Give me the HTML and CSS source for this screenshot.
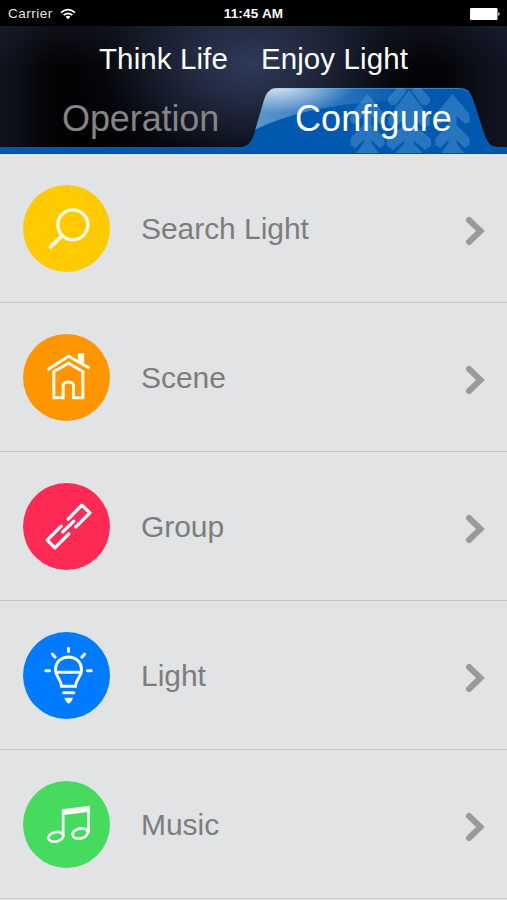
FILE: index.html
```html
<!DOCTYPE html>
<html lang="en">
<head>
<meta charset="utf-8">
<title>Configure</title>
<link rel="stylesheet" href="styles.css">
</head>
<body>
<div class="status">
  <div class="carrier"><span>Carrier</span>
    <svg class="wifi" viewBox="0 0 16 12"><g fill="none" stroke="#fff" stroke-width="1.7"><path d="M1 4.600Q8-1.400 15 4.600M3.700 7.200Q8 3.500 12.300 7.200"/></g><path d="M5.500 8.700Q8 6.900 10.500 8.700L8 11.300Z" fill="#fff"/></svg>
  </div>
  <div class="time">11:45 AM</div>
  <svg class="battery" viewBox="0 0 31 12"><rect width="27.500" height="12" rx="1.200" fill="#fff"/><path d="M28.300 4Q31 6 28.300 8Z" fill="#fff"/></svg>
</div>
<header class="header">
  <svg class="tab-shape" viewBox="0 0 507 128">
    <defs>
      <linearGradient id="gloss" x1="0" y1="0" x2="1" y2="0">
        <stop offset="0" stop-color="#fff" stop-opacity=".38"/><stop offset=".35" stop-color="#fff" stop-opacity=".24"/><stop offset="1" stop-color="#fff" stop-opacity="0"/>
      </linearGradient>
      <radialGradient id="glow" gradientUnits="userSpaceOnUse" cx="0" cy="0" r="1" gradientTransform="translate(279 60) scale(74 27)">
        <stop offset="0" stop-color="#fff" stop-opacity=".78"/><stop offset="1" stop-color="#fff" stop-opacity="0"/>
      </radialGradient>
      <clipPath id="tab"><path d="M0 121H240C247 121 251 117 254 108L264 74C267 65 271 62 278 62H459C467 62 470 65 473 73L484 107C488 118 491 121 499 121H507V128H0Z"/></clipPath>
      <clipPath id="gloss-area"><path d="M250 106Q300 80 385 75Q440 72 474 73L470 60H250Z"/></clipPath>
      <path id="pine" d="M0 68L17 88V96L13 98L4 90V99L17 112V119L12 122L4 114V117L12 128H-12L-4 117V114L-12 122L-17 119V112L-4 99V90L-13 98L-17 96V88Z"/>
    </defs>
    <g clip-path="url(#tab)">
      <rect width="507" height="128" fill="#0059ae"/>
      <g clip-path="url(#gloss-area)">
        <rect x="250" y="60" width="160" height="46" fill="url(#gloss)"/>
        <rect x="250" y="60" width="160" height="46" fill="url(#glow)"/>
      </g>
      <g fill="#6faee0" fill-opacity=".34">
        <use href="#pine" x="367.500"/>
        <use href="#pine" x="452.500"/>
        <path d="M388 72L397 62H403L407 64L396 79H391L388 76ZM430 72L421 62H415L411 64L422 79H427L430 76Z"/>
        <path d="M409 64L430 92V99L424 102L414 93V99L431 113V120L425 124L414 115V118L424 128H394L404 118V115L393 124L387 120V113L404 99V93L394 102L388 99V92Z"/>
      </g>
      <path d="M0 127.500H507" stroke="#1d4a78"/>
    </g>
    <path d="M270 63.500Q274 62.500 278 62.500H459Q465 62.500 469 66" fill="none" stroke="#8dbbe3" stroke-opacity=".4"/>
  </svg>
  <h1 class="title"><span>Think Life</span><span>Enjoy Light</span></h1>
  <nav class="tabs"><span class="tab">Operation</span><span class="tab active">Configure</span></nav>
</header>
<main class="list">
  <div class="row">
    <svg class="icon yellow" viewBox="37.500 29.500 261 261"><g fill="none" stroke="#fffbe6" stroke-width="10"><circle cx="187" cy="149" r="45"/><path d="M154 182L120 215" stroke-width="12" stroke-linecap="round"/></g></svg>
    <span class="label">Search Light</span>
    <svg class="chevron" viewBox="0 0 22 30"><path d="M4 4L15.500 15L4 26"/></svg>
  </div>
  <div class="row">
    <svg class="icon orange" viewBox="37.500 26.500 261 261"><g fill="none" stroke="#fffbe9" stroke-width="9"><path d="M111 134L174 93L237 129"/><path d="M130 218V139L174 114L217 139V218H189V181C189 167 158 167 158 181V218Z"/></g><path d="M202 84H221V119L202 108Z" fill="#fffbe9"/></svg>
    <span class="label">Scene</span>
    <svg class="chevron" viewBox="0 0 22 30"><path d="M4 4L15.500 15L4 26"/></svg>
  </div>
  <div class="row">
    <svg class="icon red" viewBox="37.500 24.500 261 261"><g fill="none" stroke="#fff" stroke-width="10" stroke-linecap="round" stroke-linejoin="round"><path d="M173 133L214 91L238 114L196 156"/><path d="M152 154L110 196L133 219L175 177"/><path d="M157 171L190 139"/></g></svg>
    <span class="label">Group</span>
    <svg class="chevron" viewBox="0 0 22 30"><path d="M4 4L15.500 15L4 26"/></svg>
  </div>
  <div class="row">
    <svg class="icon blue" viewBox="37.500 36.500 261 261"><g fill="none" stroke="#f4faff" stroke-width="9"><path d="M153 199C151 176 135 171 135 151C135 98 213 98 213 151C213 171 197 176 195 199Z"/><path d="M135 157H213"/><path d="M174 85V95M126 103L134 112M222 103L214 112M106 153H117M231 153H242M159 219H190" stroke-linecap="round"/></g><path d="M161 234H187Q185 246 174 252Q164 246 161 234Z" fill="#f4faff"/></svg>
    <span class="label">Light</span>
    <svg class="chevron" viewBox="0 0 22 30"><path d="M4 4L15.500 15L4 26"/></svg>
  </div>
  <div class="row">
    <svg class="icon green" viewBox="37.500 34.500 261 261"><g fill="none" stroke="#f5fff7" stroke-width="8"><ellipse cx="136" cy="202" rx="23" ry="14" transform="rotate(-13 136 202)"/><ellipse cx="209" cy="192" rx="23" ry="15" transform="rotate(-13 209 192)"/><path d="M158 201V120M234 191V112"/></g><path d="M154 119L238 109V127L154 137Z" fill="#f5fff7"/></svg>
    <span class="label">Music</span>
    <svg class="chevron" viewBox="0 0 22 30"><path d="M4 4L15.500 15L4 26"/></svg>
  </div>
</main>
</body>
</html>
```
FILE: styles.css
```css
* { box-sizing: border-box; }
body {
  margin: 0;
  height: 900px;
  overflow: hidden;
  background: #e1e3e5;
  font-family: "Liberation Sans", Arial, sans-serif;
}
svg { display: block; flex: none; }
.status {
  display: grid;
  grid-template-columns: 1fr auto 1fr;
  align-items: center;
  height: 26px;
  padding: 2px 6px 0 8px;
  background: #000;
  color: #fff;
  font-size: 13.500px;
  line-height: 24px;
}
.carrier { display: flex; align-items: center; gap: 7px; color: #e4e4e4; letter-spacing: .5px; }
.wifi { width: 16px; height: 12px; }
.time { font-weight: bold; font-size: 13.500px; letter-spacing: .2px; padding-right: 2px; }
.battery { justify-self: end; width: 31px; height: 12px; }
.header {
  position: relative;
  height: 128px;
  background:
    radial-gradient(ellipse 195px 135px at 250px 36px, #2e3a59 0%, rgba(39, 48, 74, .94) 25%, rgba(27, 34, 54, .8) 50%, rgba(12, 16, 27, .45) 75%, transparent 100%),
    linear-gradient(90deg, #10141e 0, #0b0e17 20px, #040507 45px, #000 75px, #000 420px, #05060a 450px, #0c0f19 480px, #111522 507px);
}
.header::before {
  content: "";
  position: absolute;
  inset: 0;
  background: linear-gradient(180deg, rgba(36, 43, 62, .35), transparent 40px);
}
.tab-shape { position: absolute; left: 0; top: 0; width: 507px; height: 128px; }
.title {
  position: relative;
  display: flex;
  gap: 33px;
  margin: 0;
  padding: 16px 0 0 99px;
  height: 62px;
  color: #fff;
  font-size: 29.500px;
  font-weight: normal;
  letter-spacing: .1px;
  line-height: 34px;
}
.tabs { position: relative; display: flex; height: 66px; padding: 9px 0 0 62px; font-size: 36px; line-height: 43px; }
.tab { flex: none; width: 233px; color: #858585; letter-spacing: -.1px; white-space: nowrap; }
.active { width: auto; color: #fff; letter-spacing: .1px; }
.row {
  display: flex;
  align-items: center;
  height: 149px;
  padding: 0 20px 0 23px;
  border-bottom: 1px solid #c3c5c7;
}
.icon { width: 87px; height: 87px; border-radius: 50%; }
.yellow { background: #ffca00; }
.orange { background: #ff9600; }
.red { background: #ff2b55; }
.blue { background: #007aff; }
.green { background: #46da5f; }
.label {
  flex: 1;
  padding: 1px 0 0 31px;
  color: #7d7d7d;
  font-size: 30px;
  letter-spacing: -.05px;
  line-height: 36px;
}
.chevron { width: 22px; height: 30px; margin-top: 5px; }
.chevron path { fill: none; stroke: #999a9b; stroke-width: 6; stroke-linecap: round; }
```
